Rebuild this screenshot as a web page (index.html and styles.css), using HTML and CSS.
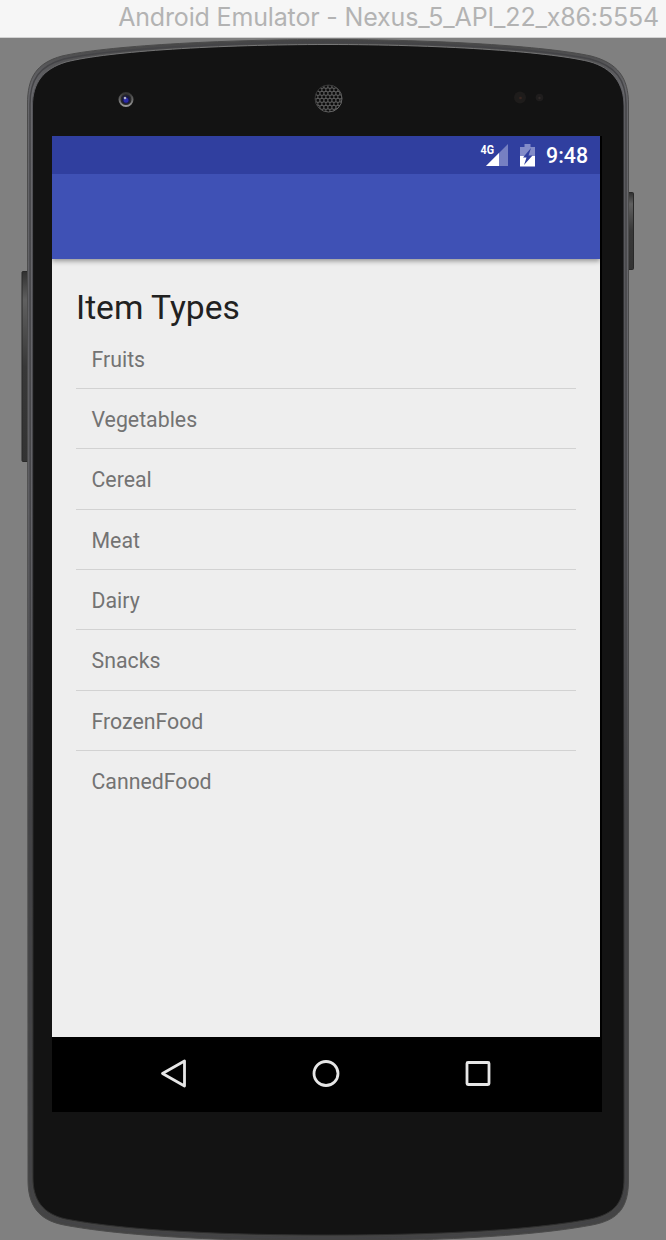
FILE: index.html
```
<!DOCTYPE html>
<html lang="en">
<head>
<meta charset="utf-8">
<title>Android Emulator</title>
<link rel="stylesheet" href="styles.css">
</head>
<body>
<div class="window">
  <header class="titlebar"><span class="title">Android Emulator - Nexus_5_API_22_x86:5554</span></header>
  <main class="device">
    <svg class="shell" viewBox="0 38 666 1202" width="666" height="1202">
      <defs>
        <linearGradient id="edge" x1="0" y1="0" x2="0" y2="1">
          <stop offset="0" stop-color="#454545"/><stop offset=".04" stop-color="#66666a"/>
          <stop offset=".4" stop-color="#626267"/><stop offset=".65" stop-color="#444446"/><stop offset="1" stop-color="#444"/>
        </linearGradient>
        <linearGradient id="rim" x1="0" y1="0" x2="0" y2="1">
          <stop offset="0" stop-color="#777"/><stop offset=".05" stop-color="#55555a"/><stop offset=".6" stop-color="#39393b"/><stop offset="1" stop-color="#2c2c2c"/>
        </linearGradient>
        <linearGradient id="key" x1="0" y1="0" x2="0" y2="1">
          <stop offset="0" stop-color="#303030"/><stop offset=".15" stop-color="#606060"/><stop offset=".5" stop-color="#383838"/><stop offset="1" stop-color="#333"/>
        </linearGradient>
        <linearGradient id="lensrim" x1="0" y1="0" x2="0" y2="1">
          <stop offset="0" stop-color="#333"/><stop offset="1" stop-color="#999"/>
        </linearGradient>
        <linearGradient id="grillrim" x1="0" y1="0" x2="1" y2="1">
          <stop offset="0" stop-color="#222"/><stop offset="1" stop-color="#777"/>
        </linearGradient>
        <pattern id="mesh" width="4" height="7" patternUnits="userSpaceOnUse" x="326" y="95">
          <rect width="4" height="7" fill="#5b5b5b"/>
          <rect x=".5" y=".5" width="2.800" height="2.800" rx=".8" fill="#0c0c0c"/>
          <rect x="-1.500" y="4" width="2.800" height="2.800" rx=".8" fill="#0c0c0c"/>
          <rect x="2.500" y="4" width="2.800" height="2.800" rx=".8" fill="#0c0c0c"/>
        </pattern>
      </defs>
      <rect x="22" y="271.500" width="7" height="190" rx="1" fill="url(#key)" stroke="#292929"/>
      <rect x="627" y="192.500" width="6.500" height="77" rx="1" fill="url(#key)" stroke="#292929"/>
      <path d="M27.500 104C27.500 78 36 63 62 56C105 46 220 39.500 328 39.500C436 39.500 545 46 591 56C618 63 628.500 78 628.500 104V1180C628.500 1207 619 1220 592 1225C550 1233 470 1241 328 1241C186 1241 106 1233 64 1225C38 1220 28 1205 28 1180Z" fill="url(#edge)" stroke="#4b4b4b" stroke-width="1"/>
      <path d="M30 104C30 80 39 66 64 59C107 49 220 42.300 328 42.300C436 42.300 545 49 590 59C616 66 626 80 626 104V1180C626 1204 617 1217 591 1222C549 1230 470 1238 328 1238C186 1238 107 1230 65 1222C40 1217 30.500 1202 30.500 1180Z" fill="none" stroke="#444447" stroke-width="1.500"/>
      <path d="M32.500 106C32.500 83 43 69 66 62C109 51 220 44.500 328 44.500C436 44.500 545 51 589 61.500C613 68 624 84 624 106V1178C624 1202 615 1214 590 1219C548 1227 470 1235 328 1235C186 1235 108 1227 66 1219C43 1214 33 1200 33 1178Z" fill="#131313" stroke="url(#rim)" stroke-width="1"/>
      <circle cx="126" cy="99.500" r="6.500" fill="#292929" stroke="url(#lensrim)" stroke-width="2"/>
      <circle cx="126" cy="99.500" r="4" fill="#171740"/>
      <circle cx="126" cy="100.200" r="2.500" fill="#2b2ba8"/>
      <circle cx="125" cy="98" r="1.300" fill="#b4b4c8"/>
      <circle cx="328.500" cy="98.500" r="13.500" fill="url(#mesh)" stroke="url(#grillrim)" stroke-width="1"/>
      <circle cx="520" cy="97.500" r="6" fill="#1e1c1b"/><circle cx="520.500" cy="98" r="1.300" fill="#3a2620"/>
      <circle cx="539.500" cy="97.500" r="3.800" fill="#1f1d1d"/><circle cx="539.500" cy="98" r="1.200" fill="#302a29"/>
    </svg>
    <section class="screen">
      <div class="statusbar">
        <svg class="signal" width="30" height="26" viewBox="480 142 30 26">
          <path d="M508 144V166H486Z" fill="#7680c2"/><path d="M499 153V166H486Z" fill="#fff"/>
          <text x="480.500" y="154" class="network" textLength="13.500" lengthAdjust="spacingAndGlyphs">4G</text>
        </svg>
        <svg class="battery" width="15" height="23" viewBox="520 144 15 23">
          <path d="M520 147h4.500v-3h6v3h4.500v9h-15z" fill="#838cc9"/>
          <path d="M520 156h15v10.500h-15z" fill="#fff"/>
          <path d="M531 148L523 157.500H526.500L524 165L532.500 155.500H528.500Z" fill="#303f9f"/>
        </svg>
        <span class="clock">9:48</span>
      </div>
      <div class="appbar"></div>
      <div class="content">
        <h1 class="heading">Item Types</h1>
        <ul class="list">
          <li class="item">Fruits</li>
          <li class="item">Vegetables</li>
          <li class="item">Cereal</li>
          <li class="item">Meat</li>
          <li class="item">Dairy</li>
          <li class="item">Snacks</li>
          <li class="item">FrozenFood</li>
          <li class="item">CannedFood</li>
        </ul>
      </div>
      <nav class="navbar">
        <svg width="30" height="30" viewBox="0 0 30 30"><path d="M3.500 14.500L25.500 2V27Z"/></svg>
        <svg width="30" height="30" viewBox="0 0 30 30"><circle cx="15" cy="14.500" r="12"/></svg>
        <svg width="30" height="30" viewBox="0 0 30 30"><rect x="4" y="3.500" width="22" height="22" rx="1"/></svg>
      </nav>
    </section>
  </main>
</div>
</body>
</html>
```
FILE: styles.css
```
* { box-sizing: border-box; }
body { margin: 0; font-family: Roboto, sans-serif; }
.window { width: 666px; height: 1240px; overflow: hidden; display: flex; flex-direction: column; background: #808080; }
.titlebar { height: 38px; flex: none; display: flex; justify-content: flex-end; padding-right: 7px; background: #f6f6f6; border-bottom: 1px solid #d2d2d2; }
.title { font: 400 25px/34px Inter, sans-serif; letter-spacing: -0.160px; color: #b3b3b3; white-space: nowrap; }
.device { display: grid; height: 1202px; }
.shell, .screen { grid-area: 1 / 1; }
.shell { display: block; }
.screen { width: 550px; height: 976px; margin: 98px 0 0 52px; background: #000; display: flex; flex-direction: column; }
.statusbar { width: 548px; height: 38px; flex: none; background: #303f9f; display: flex; align-items: center; justify-content: flex-end; padding-right: 12px; color: #fff; }
.signal { margin-right: 10px; }
.battery { margin-right: 11px; }
.network { font: 700 12.500px Roboto, sans-serif; fill: #fff; }
.clock { font-size: 21.300px; font-weight: 500; line-height: 38px; padding-top: 2px; }
.appbar { width: 548px; height: 85px; flex: none; background: #3f51b5; box-shadow: 0 2px 5px rgba(0,0,0,.4); clip-path: inset(0 0 -10px 0); z-index: 1; }
.content { width: 548px; flex: 1; background: #eee; padding: 26px 24px 0; }
.heading { margin: 0; font-size: 33.600px; line-height: 46px; font-weight: 400; color: #212121; }
.list { margin: -2.300px 0 0; padding: 0; list-style: none; }
.item { height: 60.330px; padding: 0 15.500px; font-size: 21.300px; line-height: 62.400px; color: #737373; border-bottom: 1px solid #d2d2d2; }
.item:last-child { border-bottom: 0; }
.navbar { height: 75px; flex: none; display: flex; justify-content: center; align-items: center; gap: 122px; padding: 0 2px 2px 0; }
.navbar svg { fill: none; stroke: #e6e6e6; stroke-width: 2.800; stroke-linejoin: round; }
```
